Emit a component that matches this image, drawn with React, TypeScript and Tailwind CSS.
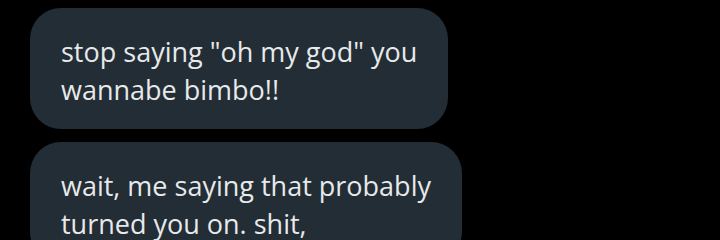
export default function App() {
  return (
    <div className="w-[720px] h-[240px] overflow-hidden bg-black pt-[8px] pl-[30px] font-['Open_Sans',sans-serif] text-[#e7e9ea]">
      <div className="flex flex-col items-start gap-[13px]">
        <Bubble lines={['stop saying "oh my god" you', "wannabe bimbo!!"]} />
        <Bubble lines={["wait, me saying that probably", "turned you on. shit,"]} />
      </div>
    </div>
  );
}

function Bubble({ lines }: { lines: string[] }) {
  return (
    <div className="rounded-[31px] bg-[#232d35] px-[31px] pt-[25px] pb-[20px] text-[27px] leading-[38px]">
      {lines.map((l, i) => (
        <div key={i} className="whitespace-nowrap">
          {l}
        </div>
      ))}
    </div>
  );
}
